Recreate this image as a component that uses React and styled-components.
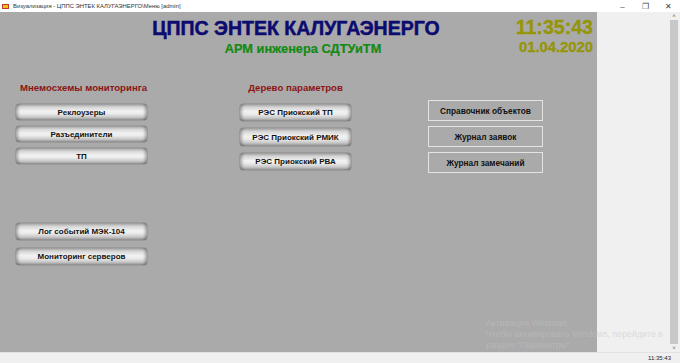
import React from "react";
import styled, { createGlobalStyle } from "styled-components";

const Global = createGlobalStyle`
  html, body { margin: 0; padding: 0; background: #f0f0f0; }
  body { font-family: "Liberation Sans", Arial, sans-serif; }
  #root { width: 680px; height: 363px; overflow: hidden; }
`;

const Window = styled.div`
  width: 680px;
  height: 363px;
  display: flex;
  flex-direction: column;
  background: #f0f0f0;
`;

const TitleBar = styled.div`
  height: 12px;
  background: #ffffff;
  display: flex;
  align-items: center;
  padding-left: 2px;
  font-size: 5.9px;
  color: #333;
  flex: none;
`;

const AppIcon = styled.svg`
  width: 8px;
  height: 7px;
  margin-right: 3px;
`;

const TitleText = styled.span`
  flex: 1;
  white-space: nowrap;
`;

const Controls = styled.div`
  display: flex;
  height: 12px;
`;

const Ctl = styled.div`
  width: 23px;
  height: 12px;
  display: flex;
  align-items: center;
  justify-content: center;
  color: #444;
  font-size: 8px;
`;

const Middle = styled.div`
  flex: 1;
  display: flex;
  min-height: 0;
  position: relative;
`;

const Main = styled.div`
  width: 597px;
  background: #aaaaaa;
  display: flex;
  flex-direction: column;
`;

const Side = styled.div`
  width: 71px;
  background: #f0f0f0;
`;

const Scroll = styled.div`
  width: 12px;
  background: #f0f0f0;
  display: flex;
  flex-direction: column;
  align-items: center;
`;

const Arrow = styled.div`
  height: 8px;
  font-size: 6px;
  line-height: 8px;
  color: #555;
`;

const Thumb = styled.div`
  flex: 1;
  width: 8px;
  background: #c8c8c8;
`;

const Status = styled.div`
  height: 10px;
  flex: none;
  background: #f0f0f0;
  border-top: 1px solid #e2e2e2;
  display: flex;
  justify-content: flex-end;
  align-items: center;
  padding-right: 9px;
  font-size: 6px;
  color: #222;
`;

const Header = styled.div`
  display: flex;
  padding-top: 4px;
`;

const TitleBlock = styled.div`
  margin-left: 150px;
  width: 292px;
  display: flex;
  flex-direction: column;
  align-items: center;
`;

const BigTitle = styled.div`
  font-weight: bold;
  font-size: 19.5px;
  line-height: 24px;
  color: #0b0b70;
  white-space: nowrap;
  -webkit-text-stroke: 0.5px #0b0b70;
`;

const SubTitle = styled.div`
  font-weight: bold;
  font-size: 12.8px;
  line-height: 17px;
  color: #138a13;
  margin-left: 14px;
  white-space: nowrap;
  -webkit-text-stroke: 0.2px #138a13;
`;

const Clock = styled.div`
  margin-left: 69px;
  width: 82px;
  display: flex;
  flex-direction: column;
  align-items: flex-end;
  color: #959508;
  font-weight: bold;
  -webkit-text-stroke: 0.3px #959508;
`;

const Time = styled.div`
  font-size: 19.6px;
  line-height: 22px;
`;

const DateT = styled.div`
  font-size: 14.8px;
  line-height: 17px;
  margin-top: 1px;
`;

const Body = styled.div`
  display: flex;
  padding-top: 25px;
`;

const Column = styled.div`
  margin-left: ${(p) => p.$left}px;
  width: ${(p) => p.$width}px;
  display: flex;
  flex-direction: column;
  padding-top: ${(p) => p.$top || 0}px;
`;

const Heading = styled.div`
  font-weight: bold;
  font-size: 9.6px;
  line-height: 12px;
  color: #8b1515;
  white-space: nowrap;
  margin-left: ${(p) => p.$indent || 0}px;
  text-align: ${(p) => (p.$center ? "center" : "left")};
  margin-bottom: 10px;
`;

const MetalButton = styled.div`
  height: ${(p) => p.$h || 16}px;
  margin-top: ${(p) => p.$gap || 0}px;
  border-radius: 3px;
  background: linear-gradient(
    to bottom,
    #9c9c9c 0%,
    #d6d6d6 20%,
    #f2f2f2 45%,
    #ececec 60%,
    #c8c8c8 82%,
    #8e8e8e 100%
  );
  box-shadow: inset 4px 0 3px -2px rgba(0, 0, 0, 0.3),
    inset -4px 0 3px -2px rgba(0, 0, 0, 0.3), 0 0 0 0.5px #8a8a8a;
  display: flex;
  align-items: center;
  justify-content: center;
  font-weight: bold;
  font-size: 8px;
  color: #111;
  white-space: nowrap;
`;

const FlatButton = styled.div`
  height: 19px;
  margin-top: ${(p) => p.$gap || 0}px;
  border: 1px solid #e4e4e4;
  display: flex;
  align-items: center;
  justify-content: center;
  font-weight: bold;
  font-size: 8.3px;
  color: #111;
  white-space: nowrap;
`;

const Watermark = styled.div`
  position: absolute;
  left: 486px;
  top: 306px;
  font-size: 8.8px;
  line-height: 11px;
  color: rgba(196, 196, 196, 0.5);
  white-space: nowrap;
  pointer-events: none;
`;

export default function App() {
  return (
    <>
      <Global />
      <Window>
        <TitleBar>
          <AppIcon viewBox="0 0 8 7">
            <rect x="0" y="1" width="7" height="5" fill="#c0392b" />
            <rect x="1" y="2" width="5" height="3" fill="#f1c40f" />
          </AppIcon>
          <TitleText>Визуализация - ЦППС ЭНТЕК КАЛУГАЭНЕРГО\Меню [admin]</TitleText>
          <Controls>
            <Ctl>–</Ctl>
            <Ctl>❐</Ctl>
            <Ctl>✕</Ctl>
          </Controls>
        </TitleBar>
        <Middle>
          <Main>
            <Header>
              <TitleBlock>
                <BigTitle>ЦППС ЭНТЕК КАЛУГАЭНЕРГО</BigTitle>
                <SubTitle>АРМ инженера СДТУиТМ</SubTitle>
              </TitleBlock>
              <Clock>
                <Time>11:35:43</Time>
                <DateT>01.04.2020</DateT>
              </Clock>
            </Header>
            <Body>
              <Column $left={16} $width={131}>
                <Heading $indent={4}>Мнемосхемы мониторинга</Heading>
                <MetalButton>Реклоузеры</MetalButton>
                <MetalButton $gap={6}>Разъединители</MetalButton>
                <MetalButton $gap={6}>ТП</MetalButton>
                <MetalButton $gap={59} $h={17}>Лог событий МЭК-104</MetalButton>
                <MetalButton $gap={8} $h={17}>Мониторинг серверов</MetalButton>
              </Column>
              <Column $left={93} $width={111}>
                <Heading $center>Дерево параметров</Heading>
                <MetalButton $h={17}>РЭС Приокский ТП</MetalButton>
                <MetalButton $gap={7} $h={18}>РЭС Приокский РМИК</MetalButton>
                <MetalButton $gap={7} $h={17}>РЭС Приокский РВА</MetalButton>
              </Column>
              <Column $left={77} $width={115} $top={18}>
                <FlatButton>Справочник объектов</FlatButton>
                <FlatButton $gap={5}>Журнал заявок</FlatButton>
                <FlatButton $gap={5}>Журнал замечаний</FlatButton>
              </Column>
            </Body>
          </Main>
          <Side />
          <Scroll>
            <Arrow>˄</Arrow>
            <Thumb />
            <Arrow>˅</Arrow>
          </Scroll>
          <Watermark>
            Активация Windows
            <br />
            Чтобы активировать Windows, перейдите в
            <br />
            раздел "Параметры".
          </Watermark>
        </Middle>
        <Status>11:35:43</Status>
      </Window>
    </>
  );
}
